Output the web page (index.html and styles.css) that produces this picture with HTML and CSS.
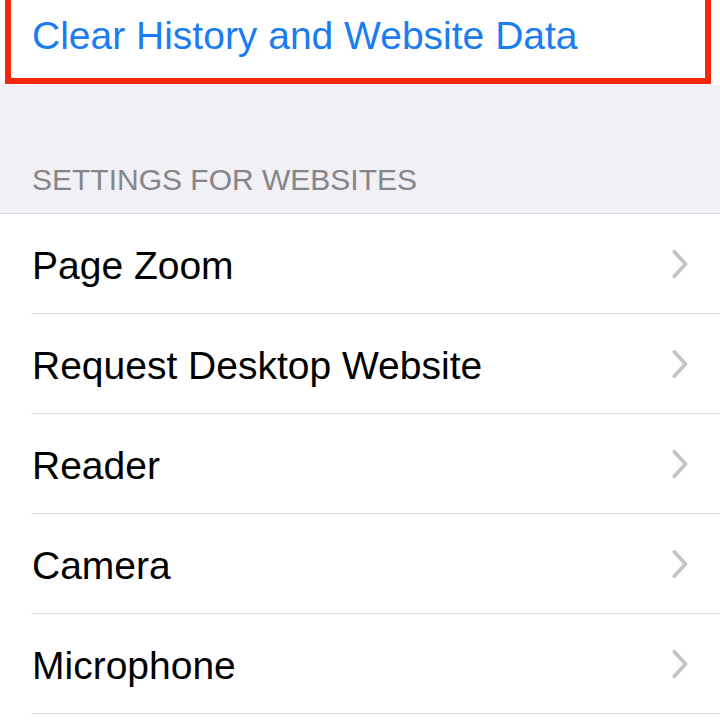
FILE: index.html
```html
<!DOCTYPE html>
<html lang="en">
<head>
    <meta charset="UTF-8">
    <meta name="viewport" content="width=device-width, initial-scale=1.0">
    <title>Safari Settings</title>
    <link rel="stylesheet" href="styles.css">
</head>
<body>
    <div class="clear-cell">
        <div class="highlight">
            <span class="action">Clear History and Website Data</span>
        </div>
    </div>

    <div class="group-header">SETTINGS FOR WEBSITES</div>

    <div class="group">
        <div class="row">
            <span>Page Zoom</span>
            <svg class="chevron" viewBox="0 0 18 30" width="18" height="30"><path d="M3.5 3 L14.5 15 L3.5 27"/></svg>
        </div>
        <div class="row">
            <span>Request Desktop Website</span>
            <svg class="chevron" viewBox="0 0 18 30" width="18" height="30"><path d="M3.5 3 L14.5 15 L3.5 27"/></svg>
        </div>
        <div class="row">
            <span>Reader</span>
            <svg class="chevron" viewBox="0 0 18 30" width="18" height="30"><path d="M3.5 3 L14.5 15 L3.5 27"/></svg>
        </div>
        <div class="row">
            <span>Camera</span>
            <svg class="chevron" viewBox="0 0 18 30" width="18" height="30"><path d="M3.5 3 L14.5 15 L3.5 27"/></svg>
        </div>
        <div class="row">
            <span>Microphone</span>
            <svg class="chevron" viewBox="0 0 18 30" width="18" height="30"><path d="M3.5 3 L14.5 15 L3.5 27"/></svg>
        </div>
    </div>
</body>
</html>
```

FILE: styles.css
```css
body {
    margin: 0;
    background-color: #f0f0f5;
    font-family: "Liberation Sans", Arial, sans-serif;
    font-size: 39px;
    color: #000;
}
.clear-cell {
    background: #fff;
    padding: 0 9px 1px 5px;
}
.highlight {
    border: 6px solid #f4270c;
    border-top: none;
    height: 84px;
    padding: 14px 0 0 21px;
    box-sizing: border-box;
    line-height: 44px;
}
.action {
    color: #1b7cf2;
}
.group-header {
    padding: 77px 0 15px 32px;
    font-size: 30px;
    line-height: 36px;
    color: #85858a;
    border-bottom: 1px solid #d4d4d9;
}
.group {
    background: #fff;
    padding-bottom: 20px;
}
.row {
    display: flex;
    justify-content: space-between;
    align-items: center;
    margin-left: 31px;
    padding: 30px 31px 25px 1px;
    line-height: 44px;
    border-bottom: 1px solid #dcdce0;
}
.chevron {
    margin-top: -4px;
}
.chevron path {
    fill: none;
    stroke: #c5c5c8;
    stroke-width: 4;
    stroke-linecap: round;
    stroke-linejoin: round;
}
```
